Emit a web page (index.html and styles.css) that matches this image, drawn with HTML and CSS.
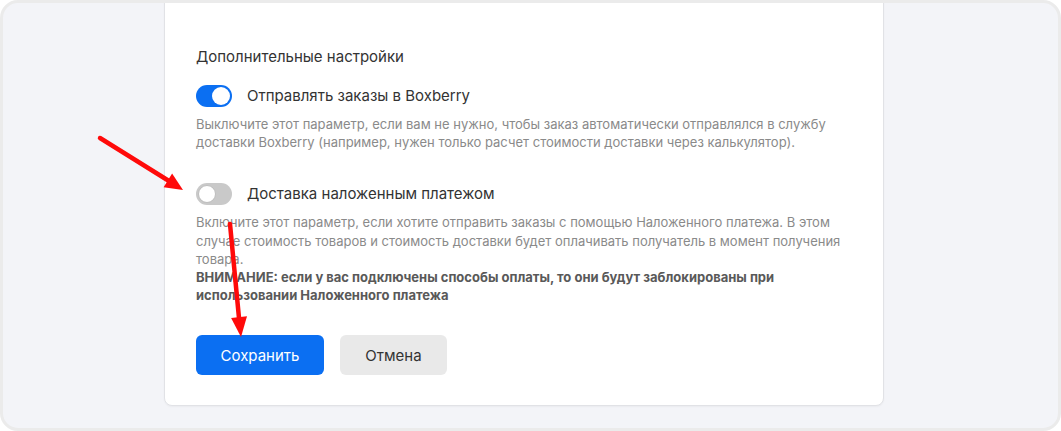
FILE: index.html
```html
<!DOCTYPE html>
<html lang="ru">
<head>
<meta charset="utf-8">
<title>Дополнительные настройки</title>
<link rel="stylesheet" href="styles.css">
</head>
<body>
<div class="frame">
  <div class="card">
    <div class="title">Дополнительные настройки</div>

    <div class="row">
      <span class="toggle on"><span class="knob"></span></span>
      <span class="label">Отправлять заказы в Boxberry</span>
    </div>
    <p class="desc">Выключите этот параметр, если вам не нужно, чтобы заказ автоматически отправлялся в службу<br>доставки Boxberry (например, нужен только расчет стоимости доставки через калькулятор).</p>

    <div class="row row2">
      <span class="toggle off"><span class="knob"></span></span>
      <span class="label">Доставка наложенным платежом</span>
    </div>
    <p class="desc">Включите этот параметр, если хотите отправить заказы с помощью Наложенного платежа. В этом<br>случае стоимость товаров и стоимость доставки будет оплачивать получатель в момент получения<br>товара.<br><b>ВНИМАНИЕ: если у вас подключены способы оплаты, то они будут заблокированы при<br>использовании Наложенного платежа</b></p>

    <div class="actions">
      <button class="btn primary">Сохранить</button>
      <button class="btn secondary">Отмена</button>
    </div>
  </div>
</div>

<svg class="arrows" width="1061" height="431" viewBox="0 0 1061 431" xmlns="http://www.w3.org/2000/svg">
  <line x1="100" y1="138" x2="169" y2="181" stroke="#ff0a0a" stroke-width="4.5" stroke-linecap="round"/>
  <polygon points="183,190 172.1,173.6 163.6,187.2" fill="#ff0a0a"/>
  <line x1="230" y1="224" x2="239" y2="318" stroke="#ff0a0a" stroke-width="4.5" stroke-linecap="round"/>
  <polygon points="241,337 231.1,317.9 247,316.3" fill="#ff0a0a"/>
</svg>
</body>
</html>
```

FILE: styles.css
```css
html, body {
  margin: 0;
  padding: 0;
  background: #ffffff;
}

body {
  font-family: Inter, "Noto Sans", "Liberation Sans", sans-serif;
  color: #333333;
  position: relative;
  width: 1061px;
  height: 431px;
  overflow: hidden;
}

.frame {
  box-sizing: border-box;
  width: 1061px;
  height: 431px;
  border: 3px solid #ebebeb;
  border-radius: 18px;
  background: #f3f4f8;
  overflow: hidden;
  display: flex;
  flex-direction: column;
}

.card {
  box-sizing: border-box;
  margin: -12px 0 0 161px;
  width: 720px;
  background: #ffffff;
  border: 1px solid #e1e2e6;
  border-radius: 8px;
  box-shadow: 0 1px 2px rgba(0, 0, 0, 0.04);
  padding: 55px 30px 30px 31px;
}

.title {
  font-size: 15px;
  line-height: 20px;
  color: #333333;
}

.row {
  display: flex;
  align-items: center;
  gap: 15px;
  height: 22px;
  margin-top: 18px;
}

.row2 {
  margin-top: 32px;
}

.label {
  font-size: 15px;
  line-height: 20px;
  color: #333333;
}

.toggle {
  box-sizing: border-box;
  width: 36px;
  height: 22px;
  border-radius: 11px;
  display: flex;
  align-items: center;
  padding: 0 2px;
  flex: none;
}

.toggle.on {
  background: #0b6ff2;
  justify-content: flex-end;
}

.toggle.off {
  background: #c9c9c9;
  justify-content: flex-start;
}

.knob {
  box-sizing: border-box;
  width: 18px;
  height: 18px;
  border-radius: 50%;
  background: #ffffff;
}

.toggle.off .knob {
  border: 1px solid #bdbdbd;
}

.desc {
  margin: 8px 0 0;
  font-size: 13px;
  line-height: 18.2px;
  color: #8a8a8a;
}

.desc b {
  color: #595959;
  font-weight: 700;
}

.actions {
  display: flex;
  gap: 16px;
  margin-top: 31px;
}

.btn {
  font-family: inherit;
  font-size: 15px;
  height: 40px;
  border: none;
  border-radius: 6px;
  padding: 0;
}

.btn.primary {
  width: 128px;
  background: #0b6ff2;
  color: #ffffff;
}

.btn.secondary {
  width: 107px;
  background: #e9e9e9;
  color: #333333;
}

.arrows {
  position: absolute;
  left: 0;
  top: 0;
  pointer-events: none;
}
```
